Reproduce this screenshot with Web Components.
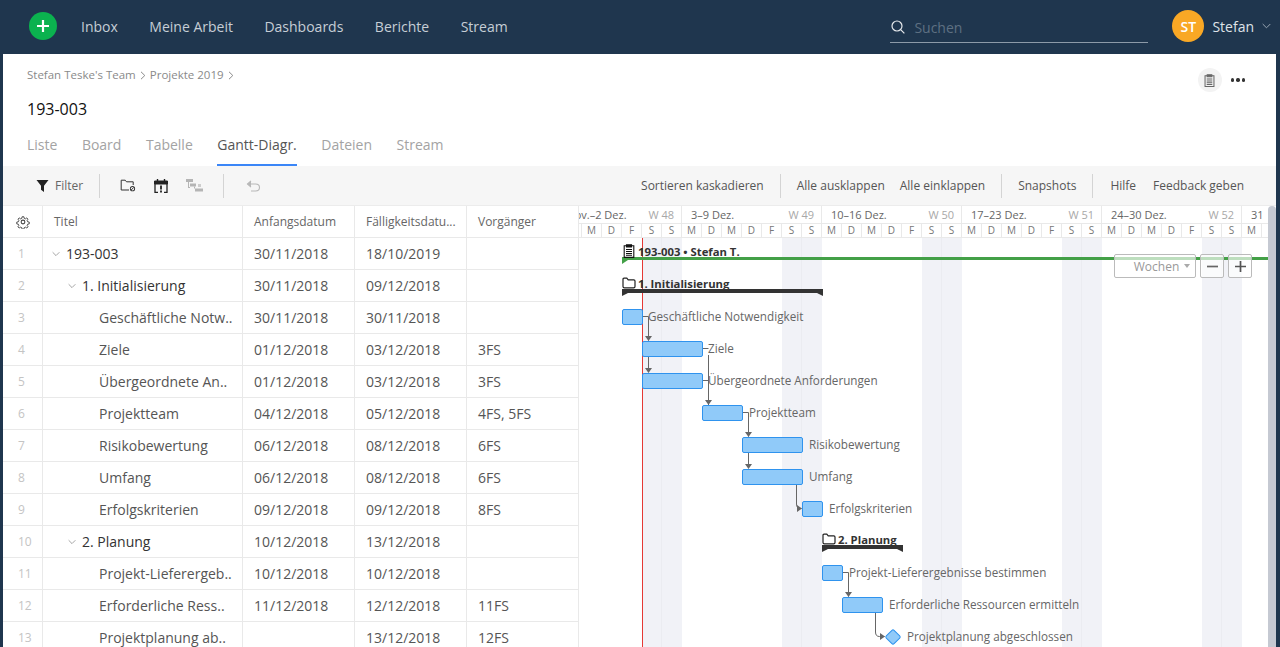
<!DOCTYPE html>
<html lang="de">
<head>
<meta charset="utf-8">
<title>193-003</title>
<style>
  html, body { margin: 0; height: 100%; overflow: hidden; }
  body {
    background: #1f364e;
    font-family: "Open Sans", "Liberation Sans", sans-serif;
    display: flex;
    flex-direction: column;
  }
  .main {
    flex: 1;
    min-height: 0;
    margin: 0 4px 0 3px;
    background: #fff;
    display: flex;
    flex-direction: column;
  }
  .split { flex: 1; min-height: 0; display: flex; }
</style>
</head>
<body>
<app-nav></app-nav>
<div class="main">
  <page-head></page-head>
  <view-tabs></view-tabs>
  <gantt-toolbar></gantt-toolbar>
  <div class="split">
    <task-table></task-table>
    <gantt-chart></gantt-chart>
  </div>
</div>

<script>
// task data, one entry per row
const TASKS = [
  { title: '193-003', start: '30/11/2018', due: '18/10/2019', pre: '', level: 0, group: true },
  { title: '1. Initialisierung', start: '30/11/2018', due: '09/12/2018', pre: '', level: 1, group: true },
  { title: 'Geschäftliche Notw..', start: '30/11/2018', due: '30/11/2018', pre: '', level: 2 },
  { title: 'Ziele', start: '01/12/2018', due: '03/12/2018', pre: '3FS', level: 2 },
  { title: 'Übergeordnete An..', start: '01/12/2018', due: '03/12/2018', pre: '3FS', level: 2 },
  { title: 'Projektteam', start: '04/12/2018', due: '05/12/2018', pre: '4FS, 5FS', level: 2 },
  { title: 'Risikobewertung', start: '06/12/2018', due: '08/12/2018', pre: '6FS', level: 2 },
  { title: 'Umfang', start: '06/12/2018', due: '08/12/2018', pre: '6FS', level: 2 },
  { title: 'Erfolgskriterien', start: '09/12/2018', due: '09/12/2018', pre: '8FS', level: 2 },
  { title: '2. Planung', start: '10/12/2018', due: '13/12/2018', pre: '', level: 1, group: true },
  { title: 'Projekt-Lieferergeb..', start: '10/12/2018', due: '10/12/2018', pre: '', level: 2 },
  { title: 'Erforderliche Ress..', start: '11/12/2018', due: '12/12/2018', pre: '11FS', level: 2 },
  { title: 'Projektplanung ab..', start: '', due: '13/12/2018', pre: '12FS', level: 2 },
];

const CHEVRON = '<svg width="9" height="6" viewBox="0 0 9 6" fill="none" stroke="currentColor" stroke-width="1"><path d="M.7 1l3.8 3.8L8.3 1"/></svg>';
const CLIPBOARD = (size, color) => `<svg width="${size}" height="${size}" viewBox="0 0 14 14" fill="none" stroke="${color}" stroke-width="1.1"><path d="M4.5 1.8H2.2v11.6h9.6V1.8H9.5"/><path d="M4.5 .9h5v2h-5z" fill="${color}"/><path d="M4 5.5h6M4 7.5h6M4 9.5h6M4 11.3h6"/></svg>`;
const FOLDER = '<svg width="14" height="12" viewBox="0 0 14 12" fill="none" stroke="#222" stroke-width="1.2"><path d="M1 9.5V2.2q0-1 1-1h2.8l1.4 1.6h5.6q1.2 0 1.2 1.2v5.5q0 1.4-1.4 1.4H2.4Q1 10.9 1 9.5z"/></svg>';

class AppNav extends HTMLElement {
  connectedCallback() {
    this.attachShadow({ mode: 'open' }).innerHTML = `
      <style>
        :host { display: flex; align-items: center; height: 54px; flex: none; padding: 0 0 2px 29px; box-sizing: border-box; color: #c6ced6; font-size: 14px; }
        .add { width: 28px; height: 28px; border-radius: 50%; background: #0bb24f; display: flex; align-items: center; justify-content: center; margin-right: 24px; }
        nav { display: flex; gap: 31.5px; font-weight: 500; }
        .search { margin-left: auto; width: 258px; height: 31px; box-sizing: border-box; border-bottom: 1px solid #8c9aa8; display: flex; align-items: center; gap: 9px; color: #5e7082; font-size: 14px; margin-top: 3px; padding-left: 1px; }
        .user { display: flex; align-items: center; margin: 0 9px 0 24px; color: #dfe3e8; font-weight: 500; }
        .avatar { width: 32px; height: 32px; border-radius: 50%; background: #f9a825; color: #fff; font-size: 14px; font-weight: 600; display: flex; align-items: center; justify-content: center; margin-right: 8px; }
        .user svg { margin-left: 8px; color: #9aa7b4; }
      </style>
      <div class="add"><svg width="12" height="12" viewBox="0 0 12 12" stroke="#fff" stroke-width="2.2"><path d="M6 0v12M0 6h12"/></svg></div>
      <nav><span>Inbox</span><span>Meine Arbeit</span><span>Dashboards</span><span>Berichte</span><span>Stream</span></nav>
      <div class="search">
        <svg width="14" height="14" viewBox="0 0 14 14" fill="none" stroke="#e6e9ec" stroke-width="1.2"><circle cx="6" cy="6" r="5"/><path d="M9.6 9.6L13.4 13.4"/></svg>
        <span>Suchen</span>
      </div>
      <div class="user"><div class="avatar">ST</div>Stefan${CHEVRON}</div>`;
  }
}

class PageHead extends HTMLElement {
  connectedCallback() {
    this.attachShadow({ mode: 'open' }).innerHTML = `
      <style>
        :host { display: flex; flex: none; justify-content: space-between; height: 68px; padding: 14px 31px 0 24px; box-sizing: border-box; }
        .crumbs { font-size: 11.5px; line-height: 14px; color: #8a8a8a; display: flex; align-items: center; gap: 4px; }
        .crumbs svg { margin-top: 1px; }
        h1 { margin: 16px 0 0; font-size: 16px; line-height: 22px; font-weight: 400; color: #111; }
        .actions { display: flex; align-items: center; gap: 9px; height: 24px; }
        .note { width: 24px; height: 24px; border-radius: 50%; background: #f3f3f3; display: flex; align-items: center; justify-content: center; }
        .dots { display: flex; gap: 2px; }
        .dots i { width: 3.4px; height: 3.4px; border-radius: 50%; background: #333; }
      </style>
      <div>
        <div class="crumbs">Stefan Teske's Team
          <svg width="6" height="9" viewBox="0 0 6 9" fill="none" stroke="#8a8a8a"><path d="M1 .8l3.8 3.7L1 8.2"/></svg>
          Projekte 2019
          <svg width="6" height="9" viewBox="0 0 6 9" fill="none" stroke="#8a8a8a"><path d="M1 .8l3.8 3.7L1 8.2"/></svg>
        </div>
        <h1>193-003</h1>
      </div>
      <div class="actions">
        <div class="note">${CLIPBOARD(13, '#666')}</div>
        <div class="dots"><i></i><i></i><i></i></div>
      </div>`;
  }
}

class ViewTabs extends HTMLElement {
  connectedCallback() {
    const tabs = ['Liste', 'Board', 'Tabelle', 'Gantt-Diagr.', 'Dateien', 'Stream'];
    this.attachShadow({ mode: 'open' }).innerHTML = `
      <style>
        :host { display: flex; flex: none; gap: 24.5px; height: 44px; padding-left: 24px; box-sizing: border-box; font-size: 14px; color: #a3a3a3; }
        span { line-height: 18px; padding-top: 14px; box-sizing: border-box; height: 44px; }
        .on { color: #555; border-bottom: 2px solid #3b86f7; }
      </style>
      ${tabs.map(t => `<span class="${t === 'Gantt-Diagr.' ? 'on' : ''}">${t}</span>`).join('')}`;
  }
}

class GanttToolbar extends HTMLElement {
  connectedCallback() {
    this.attachShadow({ mode: 'open' }).innerHTML = `
      <style>
        :host { display: flex; flex: none; align-items: center; height: 40px; padding: 0 32px 0 33px; box-sizing: border-box; background: #f6f6f6; border-bottom: 1px solid #ececec; font-size: 12px; color: #555; }
        .filter { display: flex; align-items: center; gap: 6px; color: #666; }
        .sep { width: 1px; height: 24px; background: #d4d4d4; margin: 0 16px; flex: none; }
        .icons { display: flex; align-items: center; gap: 18px; margin: 0 4px; }
        .right { margin-left: auto; display: flex; align-items: center; }
        .gap { margin-left: 15px; }
      </style>
      <div class="filter">
        <svg width="13" height="13" viewBox="0 0 13 13" fill="#222"><path d="M.5 1h12L8 6.8V13L5 10.8V6.8z"/></svg>
        Filter
      </div>
      <div class="sep"></div>
      <div class="icons">
        <svg width="16" height="13" viewBox="0 0 16 13" fill="none" stroke="#333" stroke-width="1"><path d="M9 11H1.2V1.2h4l1.3 1.6h6.7V6"/><circle cx="12.5" cy="9.7" r="2.6" fill="#333" stroke="none"/><circle cx="12.5" cy="9.7" r="1.7" fill="#f6f6f6" stroke="none"/><path d="M11.2 11l2.6-2.6"/></svg>
        <svg width="14" height="14" viewBox="0 0 14 14" fill="none" stroke="#222"><path d="M.5 2h13v3H.5z" fill="#222"/><path d="M3.5 0v2M10.500 0v2" stroke-width="1.4"/><path d="M1 5v8.500h3M13 5v8.500h-3" stroke-width="1.300"/><path d="M7 6.500v4M7 11.500v2" stroke-width="1.800"/></svg>
        <svg width="17" height="13" viewBox="0 0 17 13" fill="#b5b5b5"><path d="M0 0h7v3H0zM4 4.500h6v3H4zM9 9.500h8v3H9z"/><path d="M2 3h1v5h1v1H2zM8 7.500h1v2H8z"/><path d="M12 5h3v3h-3z" fill="#cdcdcd"/></svg>
      </div>
      <div class="sep" style="margin-left:16px"></div>
      <svg style="margin-left:6px" width="15" height="12" viewBox="0 0 15 12" fill="none" stroke="#b8b8b8" stroke-width="1.100"><path d="M1.500 4h8q4 0 4 3.500t-4 3.500H5"/><path d="M5 .8L1.500 4 5 7.200" fill="#b8b8b8"/></svg>
      <div class="right">
        <span>Sortieren kaskadieren</span>
        <div class="sep"></div>
        <span>Alle ausklappen</span>
        <span class="gap">Alle einklappen</span>
        <div class="sep"></div>
        <span>Snapshots</span>
        <div class="sep"></div>
        <span style="margin-left:1px">Hilfe</span>
        <span class="gap" style="margin-left:17px">Feedback geben</span>
      </div>`;
  }
}

class TaskTable extends HTMLElement {
  connectedCallback() {
    const cell = (txt, cls = '') => `<div class="c ${cls}">${txt}</div>`;
    const rows = TASKS.map((t, i) => {
      const pad = [24, 40, 56][t.level];
      const title = t.group
        ? `<span class="chev" style="margin-left:${pad - 15}px">${CHEVRON}</span><span>${t.title}</span>`
        : `<span style="margin-left:${pad}px">${t.title}</span>`;
      return cell(i + 1, 'num') + cell(title, 'title' + (t.group ? ' grp' : '')) + cell(t.start) + cell(t.due) + cell(t.pre);
    }).join('');
    this.attachShadow({ mode: 'open' }).innerHTML = `
      <style>
        :host { display: grid; flex: none; width: 576px; align-content: start; grid-template-columns: 40px 200px 112px 112px 112px; grid-auto-rows: 32px; font-size: 14px; color: #555; overflow: hidden; }
        .c { display: flex; align-items: center; box-sizing: border-box; border-right: 1px solid #e9e9e9; border-bottom: 1px solid #e9e9e9; padding-left: 11px; white-space: nowrap; overflow: hidden; }
        .h { font-size: 12px; color: #666; }
        .num { font-size: 12px; color: #c4c4c4; padding-left: 15px; }
        .gear { padding-left: 13px; }
        .title { padding-left: 0; }
        .grp { color: #333; font-weight: 500; }
        .chev { color: #999; display: inline-flex; margin-right: 6px; }
        .chev svg { width: 8px; }
      </style>
      <div class="c gear"><svg width="14" height="14" viewBox="0 0 24 24" fill="none" stroke="#444" stroke-width="1.800"><circle cx="12" cy="12" r="3.200"/><path d="M10.300 2h3.400l.6 3 2.300 1 2.600-1.700 2.400 2.400-1.700 2.600 1 2.300 3 .6v3.400l-3 .6-1 2.300 1.700 2.600-2.400 2.400-2.600-1.700-2.300 1-.6 3h-3.400l-.6-3-2.300-1-2.600 1.700-2.400-2.400 1.700-2.600-1-2.300-3-.6v-3.400l3-.6 1-2.300-1.700-2.600 2.400-2.400 2.600 1.700 2.300-1z" transform="translate(1.200 1.200) scale(.9)"/></svg></div>
      ${cell('Titel', 'h')}${cell('Anfangsdatum', 'h')}${cell('Fälligkeitsdatu...', 'h')}${cell('Vorgänger', 'h')}
      ${rows}`;
  }
}

class GanttChart extends HTMLElement {
  connectedCallback() {
    // everything below is given in page coordinates, the chart sits at 579,206
    const OX = 579, OY = 206;
    const weeks = [
      { x: 542, label: '26 Nov.–2 Dez.', w: 'W 48' },
      { x: 682, label: '3–9 Dez.', w: 'W 49' },
      { x: 822, label: '10–16 Dez.', w: 'W 50' },
      { x: 962, label: '17–23 Dez.', w: 'W 51' },
      { x: 1102, label: '24–30 Dez.', w: 'W 52' },
      { x: 1242, label: '31', w: '' },
    ];
    const days = ['M', 'D', 'M', 'D', 'F', 'S', 'S'];
    const weekCells = weeks.map(w => `<div class="wk" style="left:${w.x - OX}px"><span>${w.label}</span><span class="no">${w.w}</span></div>`).join('');
    let dayCells = '', shade = '';
    weeks.forEach(w => days.forEach((d, i) => {
      const x = w.x + i * 20;
      if (x + 20 > OX) dayCells += `<div class="day" style="left:${x - OX}px">${d}</div>`;
      if (i === 5) shade += `<div class="we" style="left:${x - OX}px"></div>`;
    }));
    const bars = [
      [622, 21, 309, 'Geschäftliche Notwendigkeit', 648],
      [642, 61, 341, 'Ziele', 708],
      [642, 61, 373, 'Übergeordnete Anforderungen', 708],
      [702, 41, 405, 'Projektteam', 749],
      [742, 61, 437, 'Risikobewertung', 809],
      [742, 61, 469, 'Umfang', 809],
      [802, 21, 501, 'Erfolgskriterien', 829],
      [822, 21, 565, 'Projekt-Lieferergebnisse bestimmen', 849],
      [842, 41, 597, 'Erforderliche Ressourcen ermitteln', 889],
    ].map(([x, w, y, t, lx]) =>
      `<div class="bar" style="left:${x - OX}px;top:${y - OY}px;width:${w}px"></div>
       <div class="lbl" style="left:${lx - OX}px;top:${y - OY - 1}px">${t}</div>`).join('');
    const heads = [
      [622, 'M622 249.500', 'task', '193-003 • Stefan T.', 243],
      [622, '', 'folder', '1. Initialisierung', 275],
      [822, '', 'folder', '2. Planung', 531],
    ].map(([x, , kind, t, y]) =>
      `<div class="sum" style="left:${x - OX}px;top:${y - OY}px">${kind === 'task' ? CLIPBOARD(14, '#111') : FOLDER}<span>${t}</span></div>`).join('');
    const arrowD = (x, y) => `M${x - 3.500} ${y - 5}h7l-3.500 5z`;
    const arrowR = (x, y) => `M${x - 5} ${y - 3.500}v7l5-3.500z`;
    const lines = [
      'M643 316.500h5.500v24', 'M648.500 356v16',
      'M703 348.500h5.500M708.500 355v50', 'M703 380.500h5.500',
      'M743 412.500h5.500v24', 'M748.500 452v16',
      'M796.500 484v20q0 4.500 4 4.500h1',
      'M843 572.500h5.500v24',
      'M875.500 612v20q0 4.500 4 4.500h5',
    ].join('');
    const tips = [arrowD(648.500, 341), arrowD(648.500, 373), arrowD(708.500, 405), arrowD(748.500, 437), arrowD(748.500, 469), arrowR(802, 508.500), arrowD(848.500, 597), arrowR(885, 636.500)].join('');
    const stoneX = 893 - OX, stoneY = 637 - OY;
    this.attachShadow({ mode: 'open' }).innerHTML = `
      <style>
        :host { display: block; flex: 1; min-width: 0; position: relative; overflow: hidden; font-size: 12px; color: #666; }
        .wk { position: absolute; top: 0; width: 140px; height: 17px; box-sizing: border-box; border-right: 1px solid #e9e9e9; display: flex; justify-content: space-between; padding: 0 7px 0 9px; line-height: 17px; font-size: 11px; white-space: nowrap; }
        .no { color: #a8a8a8; }
        .hline { position: absolute; left: 0; right: 0; height: 1px; background: #e9e9e9; }
        .day { position: absolute; top: 18px; width: 20px; height: 13px; box-sizing: border-box; border-right: 1px solid #e9e9e9; text-align: center; line-height: 13px; font-size: 10px; color: #777; }
        .we { position: absolute; top: 32px; bottom: 0; width: 40px; background: linear-gradient(90deg, #f1f2f7 19px, #ebecf1 19px, #ebecf1 20px, #f1f2f7 20px); }
        .today { position: absolute; left: 63px; top: 32px; bottom: 0; width: 1px; background: #e53935; }
        .bar { position: absolute; height: 16px; box-sizing: border-box; background: #90caf9; border: 1px solid #2f93ee; border-radius: 2px; }
        .lbl { position: absolute; line-height: 16px; color: #666; white-space: nowrap; font-size: 11.700px; }
        .sum { position: absolute; display: flex; align-items: center; gap: 2px; height: 16px; font-size: 11.300px; font-weight: 700; color: #333; white-space: nowrap; }
        .line { position: absolute; left: 0; top: 0; }
        .stone { position: absolute; left: ${stoneX - 6}px; top: ${stoneY - 6}px; width: 12px; height: 12px; box-sizing: border-box; background: #90caf9; border: 1px solid #2f93ee; border-radius: 2px; transform: rotate(45deg); }
        .zoom { position: absolute; left: 535px; top: 48px; display: flex; gap: 4px; color: #999; font-size: 12px; }
        .zoom div { height: 24px; box-sizing: border-box; border: 1px solid #bbb; border-radius: 2px; background: rgba(255,255,255,.65); display: flex; align-items: center; justify-content: center; }
        .zoom .sel { width: 82px; gap: 5px; padding-left: 14px; }
        .zoom .btn { width: 24px; }
        .zoom .sel i { border: 3px solid transparent; border-top: 4px solid #aaa; border-bottom: 0; }
        .thumb { position: absolute; right: 0; top: 0; bottom: 0; width: 8px; background: #c5c9d2; border-radius: 4px 4px 0 0; }
      </style>
      ${weekCells}
      <div class="hline" style="top:17px"></div>
      ${dayCells}
      <div class="hline" style="top:31px"></div>
      ${shade}
      <div class="today"></div>
      <svg class="line" width="697" height="441" viewBox="${OX} ${OY} 697 441">
        <path d="M622 257h646v3H622z" fill="#43a047"/><path d="M622 260h6l-6 4z" fill="#43a047"/>
        <path d="M622 289h201v4H622zM622 293h6l-6 3zM823 293h-6l6 3z" fill="#333"/>
        <path d="M822 545h81v4h-81zM822 549h6l-6 3zM903 549h-6l6 3z" fill="#333"/>
        <path d="${lines}" fill="none" stroke="#666"/>
        <path d="${tips}" fill="#666"/>
      </svg>
      ${heads}
      ${bars}
      <div class="stone"></div>
      <div class="lbl" style="left:${907 - OX}px;top:${628 - OY}px">Projektplanung abgeschlossen</div>
      <div class="zoom">
        <div class="sel">Wochen<i></i></div>
        <div class="btn"><svg width="11" height="11" viewBox="0 0 11 11" stroke="#666" stroke-width="1.700"><path d="M0 5.500h11"/></svg></div>
        <div class="btn"><svg width="11" height="11" viewBox="0 0 11 11" stroke="#555" stroke-width="1.700"><path d="M0 5.500h11M5.500 0v11"/></svg></div>
      </div>
      <div class="thumb"></div>`;
  }
}

customElements.define('app-nav', AppNav);
customElements.define('page-head', PageHead);
customElements.define('view-tabs', ViewTabs);
customElements.define('gantt-toolbar', GanttToolbar);
customElements.define('task-table', TaskTable);
customElements.define('gantt-chart', GanttChart);
</script>
</body>
</html>
